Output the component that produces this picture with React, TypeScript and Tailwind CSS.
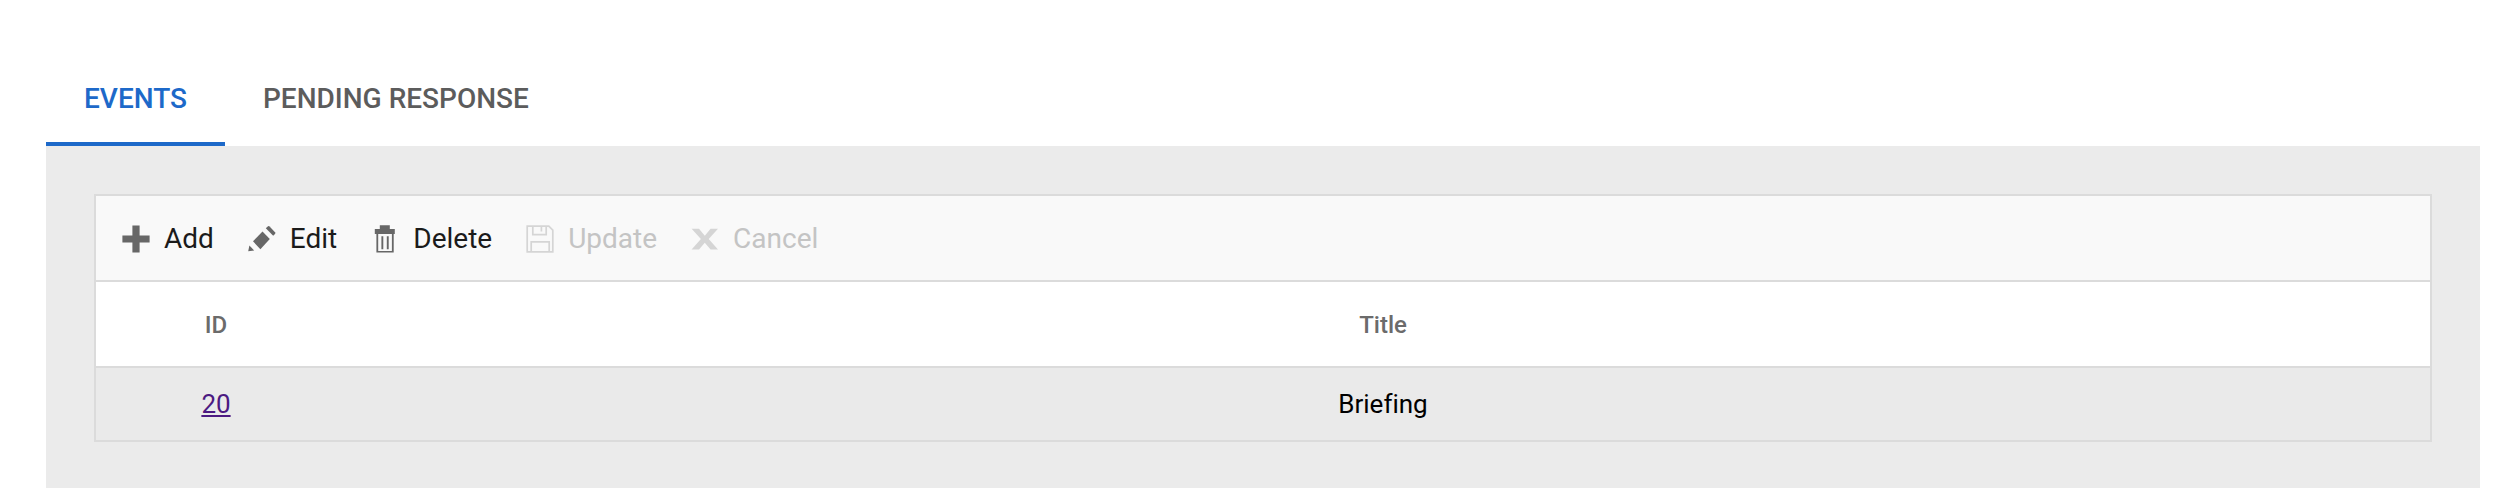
import type { ReactNode } from "react";

function Icon({ children }: { children: ReactNode }) {
  return (
    <svg viewBox="0 1 32 32" className="size-8 shrink-0" fill="currentColor" aria-hidden="true">
      {children}
    </svg>
  );
}

const actions: { label: string; disabled?: boolean; icon: ReactNode }[] = [
  {
    label: "Add",
    icon: <path d="M12.4 3.4h7.2v10h10v7.2h-10v10h-7.2v-10h-10v-7.2h10z" />,
  },
  {
    label: "Edit",
    icon: (
      <>
        <path d="M7 19.3 16.5 9.6 23.8 17 14.4 27.3z" />
        <path d="M19.8 6.3 22 4.2Q22.8 3.7 23.6 4.4L29 10.2Q29.7 11.2 29 12L27.2 13.8z" />
        <path d="M3.4 23.4 8.2 28.6 2.2 29.2z" />
      </>
    ),
  },
  {
    label: "Delete",
    icon: (
      <>
        <path d="M10.8 3.3h10v3.8h5v5H5.8v-5h5z" />
        <path d="M7.4 11.5h17.3v19.1H7.4zM9.2 12v16.9h13.7V12z" fillRule="evenodd" />
        <path d="M12.4 14.2h1.9v13h-1.9zM17.8 14.2h1.9v13h-1.9z" />
      </>
    ),
  },
  {
    label: "Update",
    disabled: true,
    icon: (
      <g fill="none" stroke="currentColor" strokeWidth="1.7">
        <path d="M3.2 4.2h21.6l4 4v21.6H3.2z" />
        <path d="M8.8 4.2v8.4h13.4V4.2M17.4 5v4.6" />
        <path d="M7.2 29.6V19.8h18v9.8" />
      </g>
    ),
  },
  {
    label: "Cancel",
    disabled: true,
    icon: <path d="M2.6 6.8h7.4l5.8 6.9 5.8-6.9H29L19.7 17.1 29 27.4h-7.4l-5.8-6.7-5.8 6.7H2.6l9.3-10.3z" />,
  },
];

const rows = [{ id: 20, title: "Briefing" }];

export default function App() {
  return (
    <main className="flex min-h-screen flex-col bg-white px-9 pl-[46px] pt-[50px] font-[Roboto,sans-serif] text-[#1b1b1b] [font-variant-ligatures:none]">
      <div role="tablist" className="flex text-[28px] leading-8 font-medium">
        <button
          role="tab"
          aria-selected="true"
          className="border-b-4 border-[#1d69c9] px-[38px] pt-[33px] pb-[27px] text-[#1d69c9]"
        >
          EVENTS
        </button>
        <button
          role="tab"
          aria-selected="false"
          className="border-b-4 border-transparent px-[38px] pt-[33px] pb-[27px] text-[#5c5c5c]"
        >
          PENDING RESPONSE
        </button>
      </div>
      <section role="tabpanel" className="flex-1 bg-[#ebebeb] p-12">
        <div className="border-2 border-[#dbdbdb]">
          <div role="toolbar" className="flex gap-8 border-b-2 border-[#dbdbdb] bg-[#f9f9f9] px-6 pt-[27px] pb-[25px]">
            {actions.map(({ label, disabled, icon }) => (
              <button
                key={label}
                disabled={disabled}
                className="group flex items-center gap-3 text-[28px] leading-8 disabled:text-[#c4c4c4]"
              >
                <span className="text-[#676767] group-disabled:text-[#d5d5d5]">
                  <Icon>{icon}</Icon>
                </span>
                {label}
              </button>
            ))}
          </div>
          <table className="w-full table-fixed text-center">
            <thead>
              <tr className="border-b-2 border-[#dbdbdb] bg-white text-2xl text-[#6b6b6b]">
                <th scope="col" className="w-60 pt-[27px] pb-[25px] font-medium">ID</th>
                <th scope="col" className="pt-[27px] pb-[25px] font-medium">Title</th>
              </tr>
            </thead>
            <tbody>
              {rows.map((row) => (
                <tr key={row.id} className="bg-[#eaeaea] text-[26px] leading-8 text-black">
                  <td className="py-5">
                    <a href={`#event-${row.id}`} className="text-[#4c1a82] underline">{row.id}</a>
                  </td>
                  <td className="py-5">{row.title}</td>
                </tr>
              ))}
            </tbody>
          </table>
        </div>
      </section>
    </main>
  );
}
